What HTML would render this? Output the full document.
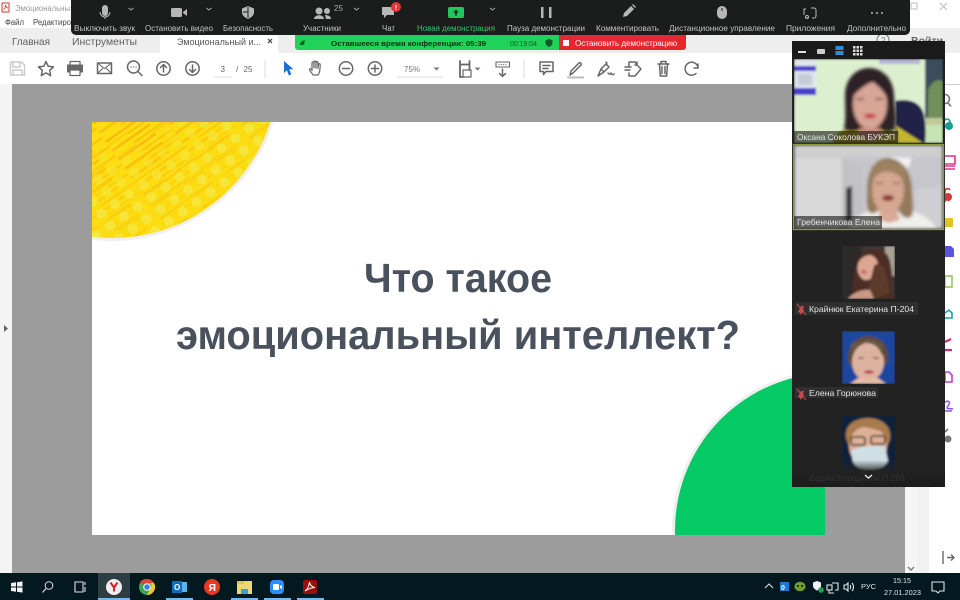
<!DOCTYPE html>
<html lang="ru"><head><meta charset="utf-8"><title>Эмоциональный интеллект</title>
<style>
html,body{margin:0;padding:0;width:960px;height:600px;overflow:hidden;background:#fff}
svg{display:block;overflow:hidden;filter:blur(.3px)}
text{font-family:"Liberation Sans","Noto Sans CJK SC",sans-serif}
.l{font-size:8px;fill:#c4c4c4}
.t{font-size:10.5px;fill:#606060}
.n{font-size:8.5px;fill:#e4e4e4}
.i{fill:none;stroke:#666;stroke-width:1.5;stroke-linecap:round;stroke-linejoin:round}
.w{fill:none;stroke:#dfe6e8;stroke-width:1.1}
</style></head><body>
<svg width="960" height="600" viewBox="0 0 960 600" xmlns="http://www.w3.org/2000/svg">
<defs>
<filter id="b1" x="-20%" y="-20%" width="140%" height="140%"><feGaussianBlur stdDeviation="1.6"/></filter>
<filter id="b2" x="-20%" y="-20%" width="140%" height="140%"><feGaussianBlur stdDeviation="1"/></filter>
<pattern id="st" width="62" height="11" patternUnits="userSpaceOnUse" patternTransform="translate(92 122) rotate(-35)">
<rect x="0" y="1" width="46" height="2.400" fill="#f9b90f"/>
<rect x="22" y="7" width="40" height="1.800" fill="#f9c00e"/>
</pattern>
<pattern id="st2" width="40" height="15" patternUnits="userSpaceOnUse" patternTransform="translate(92 122) rotate(-35)">
<rect x="0" y="13" width="24" height="1.300" fill="#f9c812"/>
</pattern>
<pattern id="dt" width="17" height="15" patternUnits="userSpaceOnUse" patternTransform="translate(92 122) rotate(-35)">
<circle cx="6" cy="5.500" r="5" fill="#f6e63c"/>
</pattern>
<radialGradient id="gi" gradientUnits="userSpaceOnUse" cx="112" cy="72" r="166">
<stop offset=".45" stop-color="#fff"/><stop offset=".82" stop-color="#444"/><stop offset="1" stop-color="#111"/>
</radialGradient>
<radialGradient id="go" gradientUnits="userSpaceOnUse" cx="112" cy="72" r="166">
<stop offset=".42" stop-color="#000"/><stop offset=".62" stop-color="#999"/><stop offset=".85" stop-color="#fff"/>
</radialGradient>
<mask id="mi" maskUnits="userSpaceOnUse" x="92" y="122" width="180" height="118"><rect x="92" y="122" width="180" height="118" fill="url(#gi)"/></mask>
<mask id="mo" maskUnits="userSpaceOnUse" x="92" y="122" width="180" height="118"><rect x="92" y="122" width="180" height="118" fill="url(#go)"/></mask>
<clipPath id="yl"><path d="M92 122H270.300A166 166 0 0 1 92 236.800Z"/></clipPath>
<clipPath id="v1"><rect x="794" y="59" width="149" height="84"/></clipPath>
<clipPath id="v2"><rect x="794" y="145" width="149" height="84"/></clipPath>
<clipPath id="p1"><rect x="842" y="246" width="53" height="53"/></clipPath>
<clipPath id="p2"><rect x="842" y="331" width="53" height="53"/></clipPath>
<clipPath id="p3"><rect x="842" y="416" width="53" height="55"/></clipPath>
<linearGradient id="fade" x1="0" y1="0" x2="0" y2="1"><stop offset="0" stop-color="#222" stop-opacity="0"/><stop offset=".45" stop-color="#222" stop-opacity=".9"/><stop offset="1" stop-color="#1c1c1c"/></linearGradient>
</defs>

<!-- window chrome -->
<rect width="960" height="600" fill="#fff"/>
<rect x="0" y="28" width="960" height="25" fill="#eeeeee"/>
<rect x="160" y="35" width="118" height="18" fill="#fff"/>
<rect x="0" y="84" width="960" height="489" fill="#fff"/>
<rect x="12" y="84" width="893" height="489" fill="#9c9c9c"/>
<rect x="0" y="84" width="12" height="489" fill="#f4f4f4"/>
<path d="M4 325l4 3.500-4 3.500z" fill="#666"/>
<rect x="905" y="84" width="12" height="489" fill="#f5f5f5"/>
<rect x="917" y="84" width="12" height="489" fill="#f1f1f1"/>
<path d="M908 567l3 3 3-3" fill="none" stroke="#666" stroke-width="1.200"/>
<rect x="929" y="84" width="31" height="1" fill="#ccc"/>
<path d="M943 551v13M947 557.500h7M951 554.500l3 3-3 3" fill="none" stroke="#666" stroke-width="1.400"/>

<!-- title bar -->
<rect x="2" y="3" width="7" height="9" fill="#fff" stroke="#d33" stroke-width="1"/>
<path d="M3.500 10c2-2 2-4 2-5 .5 2 1.500 3 2.500 3" fill="none" stroke="#d33" stroke-width=".8"/>
<text x="15" y="11" font-size="8" fill="#999" textLength="55" lengthAdjust="spacingAndGlyphs">Эмоциональны</text>
<text x="5" y="25" font-size="8" fill="#444" textLength="19" lengthAdjust="spacingAndGlyphs">Файл</text>
<text x="33" y="25" font-size="8" fill="#444" textLength="38" lengthAdjust="spacingAndGlyphs">Редактиро</text>
<rect x="911" y="3" width="6" height="6" fill="none" stroke="#bbb"/>
<path d="M940 3l7 7M947 3l-7 7" stroke="#bbb" stroke-width="1"/>
<circle cx="883" cy="40" r="6" fill="none" stroke="#777"/>
<text x="881" y="43" font-size="8" fill="#777">?</text>
<text x="911" y="44" font-size="10.500" font-weight="bold" fill="#666">Войти</text>

<!-- tabs -->
<text class="t" x="12" y="45" textLength="38" lengthAdjust="spacingAndGlyphs">Главная</text>
<text class="t" x="72" y="45" textLength="65" lengthAdjust="spacingAndGlyphs">Инструменты</text>
<text x="177" y="45" font-size="9.500" fill="#555" textLength="84" lengthAdjust="spacingAndGlyphs">Эмоциональный и...</text>
<path d="M268 39l4 4M272 39l-4 4" stroke="#555" stroke-width="1.300"/>

<!-- pdf toolbar icons -->
<g class="i">
<path d="M10.500 62h11l3 3v10h-14zM13 62v5h7v-5M13 75v-5h9v5" stroke="#ccc"/>
<path d="M46 61.500l2.200 4.800 5.300.6-3.900 3.500 1.100 5.200-4.700-2.700-4.700 2.700 1.100-5.200-3.900-3.500 5.300-.6z"/>
<path d="M70 65v-3.500h10V65" stroke-width="1.200"/>
<rect x="67.500" y="65" width="15" height="7" fill="#666" stroke-width="1"/>
<rect x="70" y="70" width="10" height="5.500" fill="#fff" stroke-width="1.200"/>
<rect x="97.500" y="63" width="14" height="10.500"/><path d="M97.500 63l7 5.500 7-5.500M97.500 73.500l5-5M111.500 73.500l-5-5" stroke-width="1.100"/>
<circle cx="133.500" cy="67" r="6"/><path d="M138 71.500l4 4"/><path d="M131 67h.1M133.500 67h.1M136 67h.1" stroke-width="1.200"/>
<circle cx="163.500" cy="68.500" r="6.700"/><path d="M163.500 72v-7M160.500 67.500l3-3 3 3"/>
<circle cx="192.500" cy="68.500" r="6.700"/><path d="M192.500 65v7M189.500 69.500l3 3 3-3"/>
<circle cx="346" cy="68.500" r="6.700"/><path d="M342.500 68.500h7"/>
<circle cx="375" cy="68.500" r="6.700"/><path d="M371.500 68.500h7M375 65v7"/>
<path d="M313 75c-1-2-3.500-4-3.500-5.500s2-.5 2.500 1v-7.500c0-1.300 1.700-1.300 1.800 0l.2 5v-6c0-1.300 1.800-1.300 1.900 0v6l.2-5.500c0-1.300 1.800-1.300 1.800 0v6l.6-4c.2-1.300 1.700-1 1.700.2 0 3.500 0 7-2 10.300z" stroke-width="1.200"/>
<path d="M460 61v3.500h9.500V61M460 64.500V77h3M469.500 64.500V70" stroke-width="1.800"/>
<rect x="463" y="70" width="8" height="7" stroke-width="1.200"/>
<rect x="496" y="62" width="13.500" height="5" stroke-width="1.100"/><path d="M498.500 64.500h8.500" stroke-dasharray="1 1.300" stroke-linecap="butt" stroke-width="1"/><path d="M502.500 69v7M499.500 73.500l3 3 3-3"/>
<path d="M540 62h13v9.500h-7l-2.500 3v-3H540zM543 65.500h7M543 68.500h5"/>
<path d="M570 75l1-4 8-8c1-1 3 1 2 2l-8 8z"/><path d="M568 77.500h15" stroke="#bbb" stroke-width="2"/>
<path d="M598 76l3-7 5-5 3 3-5 5zM606 62l1 1M608 73c1 1 2 2 3 0 1 2 2 2 3 1M601 69l3 3"/>
<path d="M629 66v-4h6l2 3 4 4-6 7h-6v-3M625 67h6M625 70h5M637 62v3h-2"/>
<path d="M658 64h11M661 64v-2.500h5V64M659.500 64l.8 12h6.400l.8-12M662 66.500v7M665 66.500v7"/>
<path d="M698 67.500a6.500 6.500 0 1 0-2 6M698 64v4h-4"/>
</g>
<path d="M284 61l9.500 8.300h-4.200l2 5.200-2.400 1-2-5.200-2.900 2.800z" fill="#1d6fd1"/>
<text x="220.500" y="72" font-size="8" fill="#666">3</text><path d="M214 77h18" stroke="#ddd"/>
<text x="236" y="72" font-size="8" fill="#666">/</text>
<text x="243.500" y="72" font-size="8" fill="#666">25</text>
<path d="M265 60v18M524 60v18" stroke="#ddd"/>
<text x="404" y="72" font-size="8" fill="#777">75%</text><path d="M397 77h46" stroke="#ddd"/>
<path d="M433.500 67.500h6l-3 3zM474.500 67.500h6l-3 3z" fill="#777"/>

<!-- slide -->
<rect x="92" y="122" width="733" height="413" fill="#fff"/>
<path d="M92 122H273.400A169 169 0 0 1 92 239.800Z" fill="#efefef"/>
<path d="M92 122H270.300A166 166 0 0 1 92 236.800Z" fill="#fbdd12"/>
<g clip-path="url(#yl)">
<g mask="url(#mi)"><rect x="92" y="122" width="180" height="118" fill="url(#st)"/></g>
<rect x="92" y="122" width="180" height="118" fill="url(#st2)"/>
<g mask="url(#mo)"><rect x="92" y="122" width="180" height="118" fill="url(#dt)"/></g>
</g>
<path d="M672.100 535A160 160 0 0 1 825 370.200V535Z" fill="#efefef"/>
<path d="M675.100 535A157 157 0 0 1 825 373.200V535Z" fill="#04c965"/>
<text x="364" y="292" font-size="41" font-weight="bold" fill="#49525c" textLength="188" lengthAdjust="spacingAndGlyphs">Что такое</text>
<text x="176" y="349" font-size="41" font-weight="bold" fill="#49525c" textLength="564" lengthAdjust="spacingAndGlyphs">эмоциональный интеллект?</text>

<!-- right sidebar icons -->
<g fill="none" stroke-width="1.600">
<circle cx="945" cy="99" r="4.500" stroke="#777"/><path d="M948 103l3 3.500" stroke="#777"/>
<path d="M944 132v-10a3 3 0 0 1 6 0v3" stroke="#1a9c94"/><circle cx="949" cy="126" r="4" fill="#1a9c94" stroke="none"/>
<path d="M945 156h10v8h-10M945 166h10M945 169h10" stroke="#e0358c"/>
<path d="M945 202v-12a3 3 0 0 1 5 0" stroke="#d9343c"/><circle cx="948" cy="197" r="4" fill="#d9343c" stroke="none"/>
<rect x="945" y="218" width="8" height="9" fill="#e5c22a" stroke="none"/>
<path d="M945 246h6l3 3v8h-9z" fill="#5a55d6" stroke="none"/>
<rect x="945" y="276" width="7" height="11" stroke="#9ac65c"/>
<path d="M945 313l4-3 3 3v5h-7" stroke="#1aa49c"/>
<path d="M945 342l6-3M945 350h7" stroke="#d8266f" stroke-width="2.200"/>
<path d="M945 372h4l3 3v7h-7z" stroke="#c83cc0"/>
<path d="M945 402c4-2 6 0 3 4s2 2 5 3M945 411h7" stroke="#8e5be0"/>
<circle cx="948" cy="439" r="3.500" fill="#777" stroke="none"/><path d="M945 432l3-3" stroke="#777"/>
</g>

<!-- zoom toolbar -->
<path d="M71 0h839v30a5 5 0 0 1-5 5H76a5 5 0 0 1-5-5z" fill="#1b1c1c"/>
<g fill="#b7b7b7">
<rect x="102" y="5" width="6" height="11" rx="3"/>
<path d="M100 12a5 5 0 0 0 10 0M105 17v2" fill="none" stroke="#b7b7b7"/>
<rect x="171" y="8" width="11" height="9" rx="1.500"/><path d="M183 12l4-3v7l-4-3z"/>
<path d="M248 6l6 2.500v4c0 3-3 5-6 6.500-3-1.500-6-3.500-6-6.500v-4z"/>
<circle cx="319" cy="11" r="3.500"/><circle cx="327" cy="11" r="3"/><path d="M314 19c0-5 10-5 10 0zM325 15c3 0 6 1 6 4h-5z"/>
<path d="M382 7h12v8h-7l-3 3v-3h-2z"/>
<rect x="541" y="7" width="2.500" height="11"/><rect x="549" y="7" width="2.500" height="11"/>
<path d="M623 17l1-4 7-7 3 3-7 7zM632 5l1-1 3 3-1 1z"/>
<rect x="717" y="6" width="10" height="13" rx="5"/>
<circle cx="872" cy="13" r="1"/><circle cx="877" cy="13" r="1"/><circle cx="882" cy="13" r="1"/>
</g>
<path d="M722 8v3" stroke="#222"/>
<path d="M243 12h5V6.700M248 12v6" stroke="#1b1c1c" fill="none"/>
<path d="M806 9h-2v6M806 18h2M811 8h3a2 2 0 0 1 2 2v6a2 2 0 0 1-2 2h-2" fill="none" stroke="#b7b7b7"/>
<circle cx="807" cy="17" r="1.500" fill="none" stroke="#b7b7b7"/>
<rect x="448" y="7" width="16" height="11" rx="2" fill="#22c55e"/>
<path d="M456 9.500l-3 3h2v3h2v-3h2z" fill="#12331f"/>
<circle cx="396" cy="7" r="5" fill="#e5333a"/><text x="394.800" y="10" font-size="7.500" font-weight="bold" fill="#fff">!</text>
<path d="M128.500 8l2.500 2 2.500-2M206.500 8l2.500 2 2.500-2M354 8l2.500 2 2.500-2M490 8l2.500 2 2.500-2" fill="none" stroke="#aaa"/>
<text x="334" y="11" font-size="8" fill="#aaa">25</text>
<g class="l">
<text x="74" y="31" textLength="61" lengthAdjust="spacingAndGlyphs">Выключить звук</text>
<text x="145" y="31" textLength="68" lengthAdjust="spacingAndGlyphs">Остановить видео</text>
<text x="223" y="31" textLength="50" lengthAdjust="spacingAndGlyphs">Безопасность</text>
<text x="303" y="31" textLength="38" lengthAdjust="spacingAndGlyphs">Участники</text>
<text x="382" y="31" textLength="13" lengthAdjust="spacingAndGlyphs">Чат</text>
<text x="417" y="31" textLength="78" lengthAdjust="spacingAndGlyphs" style="fill:#35c86a">Новая демонстрация</text>
<text x="507" y="31" textLength="78" lengthAdjust="spacingAndGlyphs">Пауза демонстрации</text>
<text x="596" y="31" textLength="63" lengthAdjust="spacingAndGlyphs">Комментировать</text>
<text x="669" y="31" textLength="106" lengthAdjust="spacingAndGlyphs">Дистанционное управление</text>
<text x="786" y="31" textLength="49" lengthAdjust="spacingAndGlyphs">Приложения</text>
<text x="847" y="31" textLength="59" lengthAdjust="spacingAndGlyphs">Дополнительно</text>
</g>

<!-- green & red bars -->
<path d="M295 35h264v15H298a3 3 0 0 1-3-3z" fill="#20d257"/>
<path d="M300 45c0-3 2-4 5-5-1 2 0 4-2 5z" fill="#0e5a28"/>
<text x="331" y="46" font-size="7.500" font-weight="bold" fill="#0c3318" textLength="155" lengthAdjust="spacingAndGlyphs">Оставшееся время конференции: 05:39</text>
<text x="510" y="46" font-size="7" fill="#0c5a28" textLength="27" lengthAdjust="spacingAndGlyphs">00:19:04</text>
<path d="M549 39l3.500 1.300v2.500c0 2-1.500 3.300-3.500 4.200-2-1-3.500-2.200-3.500-4.200v-2.500z" fill="#0b5a28"/>
<path d="M559 35h127v12a3 3 0 0 1-3 3H559z" fill="#e8262d"/>
<rect x="563" y="40" width="6" height="6" fill="#fff"/>
<text x="575" y="46" font-size="8" fill="#fff" textLength="102" lengthAdjust="spacingAndGlyphs">Остановить демонстрацию</text>

<!-- video panel -->
<rect x="792" y="41" width="153" height="446" rx="2" fill="#222222"/>
<rect x="792" y="41" width="153" height="18" fill="#1a1a1a"/>
<rect x="798" y="51" width="8" height="2" fill="#ddd"/>
<rect x="817" y="49" width="8" height="5" rx="1" fill="#ccc"/>
<rect x="835.500" y="46" width="8" height="4" fill="#2d8ce0"/><rect x="835.500" y="51" width="8" height="4" fill="#2d8ce0"/>
<g fill="#ddd"><rect x="853" y="46" width="2.500" height="2.500"/><rect x="856.500" y="46" width="2.500" height="2.500"/><rect x="860" y="46" width="2.500" height="2.500"/><rect x="853" y="49.500" width="2.500" height="2.500"/><rect x="856.500" y="49.500" width="2.500" height="2.500"/><rect x="860" y="49.500" width="2.500" height="2.500"/><rect x="853" y="53" width="2.500" height="2.500"/><rect x="856.500" y="53" width="2.500" height="2.500"/><rect x="860" y="53" width="2.500" height="2.500"/></g>

<!-- video 1 -->
<g clip-path="url(#v1)"><g filter="url(#b2)">
<rect x="794" y="59" width="149" height="84" fill="#dcf0cf"/>
<rect x="794" y="60" width="22" height="35" fill="#dfe6ee"/>
<rect x="794" y="66" width="22" height="5" fill="#4a3ccc"/>
<rect x="794" y="88" width="22" height="7" fill="#4a3ccc"/>
<rect x="798" y="74" width="14" height="11" fill="#c4ccd6"/>
<rect x="879" y="59" width="41" height="5" fill="#b7b3d8"/>
<rect x="925" y="59" width="18" height="59" fill="#3b4d5c"/>
<path d="M928 90c4-10 12-12 15-8v36h-15z" fill="#6f8f5a"/>
<rect x="925" y="118" width="18" height="7" fill="#c2c89a"/>
<rect x="925" y="125" width="18" height="18" fill="#c5e5b5"/>
<path d="M895 101c12-3 26 0 29 14 2 11 2 20 1 28h-30z" fill="#24234a"/>
<path d="M833 143c2-12 14-17 28-18h16c14 1 22 8 25 18z" fill="#b1a52e"/>
<path d="M895 125l28 18h-22z" fill="#c4b62d"/>
</g>
<g filter="url(#b1)">
<path d="M845 98c-1-18 10-30 24-30s25 12 25 28c1 14 3 22 1 33-5 4-12 3-15-1l-20 1c-7 3-14 2-16-1 2-9 1-19 1-30z" fill="#2f2226"/>
<ellipse cx="870" cy="104" rx="17" ry="25" fill="#d8a596"/>
<path d="M853 96c6-6 13-12 20-14 5 4 11 9 14 16l1-22-35-1z" fill="#2f2226"/>
<path d="M856 99h8M875 99h8" stroke="#4f3535" stroke-width="1.500"/>
<ellipse cx="870" cy="116" rx="6" ry="2.200" fill="#c8283a"/>
<path d="M860 128h20l4 8-12 6-14-6z" fill="#c98f7f"/>
</g>
<rect x="794" y="131" width="104" height="12" fill="#000" opacity=".55"/>
</g>
<text class="n" x="797" y="140" textLength="98" lengthAdjust="spacingAndGlyphs">Оксана Соколова БУКЭП</text>

<!-- video 2 -->
<g clip-path="url(#v2)"><g filter="url(#b1)">
<rect x="794" y="145" width="149" height="84" fill="#c6c6cb"/>
<rect x="794" y="158" width="48" height="71" fill="#d9d9d9"/>
<path d="M794 145h149v12H794z" fill="#cfcfd1"/>
<path d="M842 158l20 10v61h-20z" fill="#c2c1c4"/>
<path d="M846 188l6-2v32l-6 5z" fill="#2a2a2a"/>
<path d="M890 157l22 1-4 10-12-3z" fill="#f2f2f2"/>
<path d="M915 190l28-5v44h-28z" fill="#cfced2"/>
<path d="M847 229c5-14 25-20 41-22 18 1 40 6 49 22z" fill="#eeeeea"/>
<path d="M867 190c0-22 10-32 21-32s23 10 24 30c0 14 3 22-1 29-5 2-9 0-12-6h-22c-3 4-7 3-9-1-2-7-1-13-1-20z" fill="#94795a"/>
<ellipse cx="888" cy="190" rx="16" ry="24" fill="#d6a792"/>
<path d="M871 183c5-10 13-12 19-11 7 1 12 5 14 12l1-18-18-5-16 6z" fill="#9d8161"/>
<ellipse cx="888" cy="198" rx="6" ry="3" fill="#8a3030"/>
<path d="M875 183h8M893 183h8" stroke="#6d5247" stroke-width="1.300"/>
<path d="M880 211h17l3 9-12 3-10-4z" fill="#d9a994"/>
</g>
<rect x="794" y="216" width="88" height="13" fill="#000" opacity=".55"/>
</g>
<rect x="793.500" y="144.500" width="150" height="85" fill="none" stroke="#8d993b" stroke-width="1.300"/>
<text class="n" x="797" y="225" textLength="83" lengthAdjust="spacingAndGlyphs">Гребенчикова Елена</text>

<!-- portrait 1 -->
<g clip-path="url(#p1)"><g filter="url(#b2)">
<rect x="842" y="246" width="53" height="53" fill="#3c3835"/>
<rect x="842" y="246" width="20" height="53" fill="#2d2c2a"/>
<rect x="885" y="246" width="10" height="30" fill="#a8a294"/>
<path d="M852 290c3-14 2-28 10-36 8-7 20-7 26 2 5 10 4 28 6 43h-35z" fill="#4e2f26"/>
<path d="M858 272c-2-8 2-16 12-17 5 1 9 6 8 14-2 7-7 11-12 11-4 0-6-3-8-8z" fill="#dba793"/>
<path d="M874 266c3-4 8-2 10 2l6 24-16 7-8-1z" fill="#5d3a2b"/>
<path d="M848 299c4-6 14-10 22-9l4 9z" fill="#c79a86"/>
<ellipse cx="864" cy="272" rx="3" ry="2" fill="#c46b6b"/>
</g></g>
<rect x="795" y="302" width="123" height="13" fill="#2f2f2f"/>
<path d="M798 312l3-6h3l-1 3 1 1-3 5-1-2z" fill="#c9484d"/><path d="M797 304l9 11" stroke="#c9484d"/>
<text class="n" x="809" y="312" textLength="105" lengthAdjust="spacingAndGlyphs">Крайнюк Екатерина П-204</text>

<!-- portrait 2 -->
<g clip-path="url(#p2)"><g filter="url(#b2)">
<rect x="842" y="331" width="53" height="53" fill="#1d46a0"/>
<path d="M848 362c-2-16 8-26 20-26 13 0 22 10 20 26l-4 4H851z" fill="#5c4a3a"/>
<path d="M855 345c8-6 20-6 26 0l-8 0-10-2z" fill="#b8b39e"/>
<ellipse cx="868" cy="362" rx="16" ry="19" fill="#ddb3a0"/>
<path d="M852 357c2-9 8-14 14-14 8 0 14 5 16 13l1-12-16-5-16 5z" fill="#6a5744"/>
<ellipse cx="869" cy="372" rx="5" ry="1.800" fill="#b83c50"/>
<path d="M858 358h6M873 358h6" stroke="#574238" stroke-width="1.200"/>
<path d="M858 378h20l8 6h-36z" fill="#e5bba8"/>
</g></g>
<rect x="795" y="387" width="83" height="11" fill="#2f2f2f"/>
<path d="M798 397l3-6h3l-1 3 1 1-3 5-1-2z" fill="#c9484d"/><path d="M797 389l9 11" stroke="#c9484d"/>
<text class="n" x="809" y="396" textLength="67" lengthAdjust="spacingAndGlyphs">Елена Горюнова</text>

<!-- portrait 3 -->
<g clip-path="url(#p3)"><g filter="url(#b2)">
<rect x="842" y="416" width="53" height="55" fill="#10233e"/>
<path d="M846 438c-2-12 8-20 22-20s24 8 22 22l-4 8h-36z" fill="#a97a4d"/>
<ellipse cx="868" cy="446" rx="19" ry="20" fill="#dfb096"/>
<path d="M849 436c6-8 14-10 20-8 6 1 13 3 19 8l1-8-18-8-18 4z" fill="#a97a4d"/>
<rect x="851" y="437" width="14" height="8" rx="2" fill="none" stroke="#2d2a2a" stroke-width="1.600"/>
<rect x="871" y="436" width="14" height="8" rx="2" fill="none" stroke="#2d2a2a" stroke-width="1.600"/>
<path d="M851 451c8-5 26-6 34-4l3 14c-3 6-8 8-17 9-10 0-16-3-18-8z" fill="#cfe0e5"/>
</g></g>
<rect x="792" y="460" width="153" height="27" fill="url(#fade)"/>
<text x="809" y="481" font-size="8.500" fill="#333" textLength="96" lengthAdjust="spacingAndGlyphs">Вадим Бородиной П-203</text>
<path d="M865 475l3.500 3 3.500-3" fill="none" stroke="#eee" stroke-width="1.300"/>

<!-- taskbar -->
<rect x="0" y="573" width="960" height="27" fill="#04181f"/>
<g fill="#f2f2f2"><path d="M11 583l5-.7v4.200h-5zM17 582.200l5.500-.8v5.100H17zM11 587.500h5v4.200l-5-.7zM17 587.500h5.500v5.100l-5.500-.8z"/></g>
<circle cx="49" cy="585.500" r="3.800" fill="none" stroke="#dde" stroke-width="1"/><path d="M46 588.500l-3.500 4" stroke="#dde" stroke-width="1.100"/>
<path d="M75 582h8v10h-8zM85 582v3M85 587v5" fill="none" stroke="#dde" stroke-width="1.100"/>
<rect x="98" y="573" width="32" height="27" fill="#2c3d43"/>
<rect x="98" y="598" width="32" height="2" fill="#76b9ed"/>
<rect x="166" y="598" width="27" height="2" fill="#76b9ed"/>
<rect x="231" y="598" width="27" height="2" fill="#76b9ed"/>
<rect x="264" y="598" width="27" height="2" fill="#76b9ed"/>
<rect x="297" y="598" width="27" height="2" fill="#76b9ed"/>
<circle cx="114" cy="587" r="8" fill="#eee"/>
<path d="M110.500 582.500l3.500 5v4M117.500 582.500l-3.500 5" fill="none" stroke="#d4202a" stroke-width="2"/>
<circle cx="147" cy="587" r="8" fill="#3da552"/>
<path d="M147 579a8 8 0 0 1 7 4h-7a4 4 0 0 0-4 2l-3-3a8 8 0 0 1 7-3z" fill="#de4535"/>
<path d="M154 583a8 8 0 0 1-7 12l3-6a4 4 0 0 0 0-6z" fill="#f7c631"/>
<circle cx="147" cy="587" r="3.800" fill="#fff"/><circle cx="147" cy="587" r="2.800" fill="#3a7ee6"/>
<rect x="179" y="582" width="8" height="10" fill="#5db2e8"/>
<rect x="172" y="581" width="10" height="12" fill="#0f6cbd"/>
<text x="174" y="590" font-size="8" font-weight="bold" fill="#fff">O</text>
<circle cx="212" cy="587" r="8" fill="#e8391e"/>
<text x="208.500" y="591" font-size="10.500" font-weight="bold" fill="#fff">Я</text>
<rect x="237" y="581" width="15" height="13" fill="#f1d774"/>
<rect x="237" y="581" width="7" height="3" fill="#e5bf52"/>
<rect x="241" y="589" width="7" height="5" fill="#39a4c9"/>
<rect x="270" y="580" width="14" height="14" rx="4" fill="#2d8cff"/>
<rect x="273" y="584" width="6" height="6" rx="1" fill="#fff"/><path d="M280 586l2-1v4l-2-1z" fill="#fff"/>
<rect x="303" y="580" width="14" height="14" rx="2" fill="#9c0d0d"/>
<path d="M305 591c3-2 4-5 4.500-9 .5 3 2 5 5.500 5.500-3 0-6 1-10 3.500z" fill="none" stroke="#fff" stroke-width="1"/>

<path d="M765 588l4-4 4 4" fill="none" stroke="#dfe6e8" stroke-width="1"/>
<rect x="780" y="582" width="9" height="9" fill="#1d78d0"/><text x="781" y="590" font-size="7" font-weight="bold" fill="#fff">0</text>
<ellipse cx="800" cy="586.500" rx="5.500" ry="4.800" fill="#6f9e2c"/>
<circle cx="798" cy="586" r="1" fill="#111"/><circle cx="802" cy="586" r="1" fill="#111"/>
<path d="M817 581l4 1.500v3c0 2.500-2 4-4 5-2-1-4-2.500-4-5v-3z" fill="#f2f2f2"/>
<circle cx="821" cy="590" r="2.800" fill="#1f9d55"/>
<g class="w"><rect x="827" y="585" width="5" height="5"/><path d="M832 583h6v7h-3M829 590v3h5"/>
<path d="M844 585h2l2-2v8l-2-2h-2zM850 585c1 1 1 3 0 4M852 583c2 2 2 6 0 8"/></g>
<text x="861" y="589" font-size="7.500" fill="#dfe6e8" textLength="15" lengthAdjust="spacingAndGlyphs">РУС</text>
<text x="893" y="583" font-size="7.500" fill="#dfe6e8" textLength="18" lengthAdjust="spacingAndGlyphs">15:15</text>
<text x="884" y="595" font-size="7.500" fill="#dfe6e8" textLength="37" lengthAdjust="spacingAndGlyphs">27.01.2023</text>
<path d="M932 582h12v9h-4l-2 2-2-2h-4z" class="w"/>
</svg>
</body></html>
